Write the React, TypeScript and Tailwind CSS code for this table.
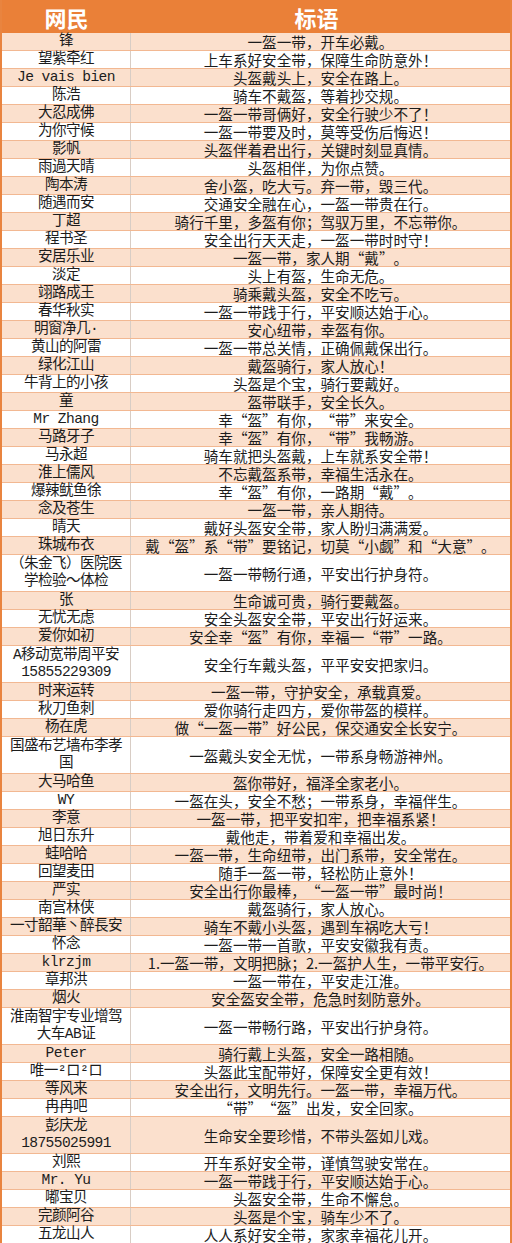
import React from "react";

type Row = {
  name: React.ReactNode;
  slogan: string;
  tall?: boolean;
};

const ROWS: Row[] = [
  { name: "锋", slogan: "一盔一带，开车必戴。" },
  { name: "望紫牵红", slogan: "上车系好安全带，保障生命防意外！" },
  { name: "Je vais bien", slogan: "头盔戴头上，安全在路上。" },
  { name: "陈浩", slogan: "骑车不戴盔，等着抄交规。" },
  { name: "大忍成佛", slogan: "一盔一带哥俩好，安全行驶少不了！" },
  { name: "为你守候", slogan: "一盔一带要及时，莫等受伤后悔迟！" },
  { name: "影帆", slogan: "头盔伴着君出行，关键时刻显真情。" },
  { name: "雨過天晴", slogan: "头盔相伴，为你点赞。" },
  { name: "陶本涛", slogan: "舍小盔，吃大亏。弃一带，毁三代。" },
  { name: "随遇而安", slogan: "交通安全融在心，一盔一带贵在行。" },
  { name: "丁超", slogan: "骑行千里，多盔有你；驾驭万里，不忘带你。" },
  { name: "程书圣", slogan: "安全出行天天走，一盔一带时时守！" },
  { name: "安居乐业", slogan: "一盔一带，家人期“戴”。" },
  { name: "淡定", slogan: "头上有盔，生命无危。" },
  { name: "翊路成王", slogan: "骑乘戴头盔，安全不吃亏。" },
  { name: "春华秋实", slogan: "一盔一带践于行，平安顺达始于心。" },
  { name: "明窗净几·", slogan: "安心纽带，幸盔有你。" },
  { name: "黄山的阿雷", slogan: "一盔一带总关情，正确佩戴保出行。" },
  { name: "绿化江山", slogan: "戴盔骑行，家人放心！" },
  { name: "牛背上的小孩", slogan: "头盔是个宝，骑行要戴好。" },
  { name: "童", slogan: "盔带联手，安全长久。" },
  { name: "Mr Zhang", slogan: "幸“盔”有你，“带”来安全。" },
  { name: "马路牙子", slogan: "幸“盔”有你，“带”我畅游。" },
  { name: "马永超", slogan: "骑车就把头盔戴，上车就系安全带！" },
  { name: "淮上儒风", slogan: "不忘戴盔系带，幸福生活永在。" },
  { name: "爆辣鱿鱼徐", slogan: "幸“盔”有你，一路期“戴”。" },
  { name: "念及苍生", slogan: "一盔一带，亲人期待。" },
  { name: "晴天", slogan: "戴好头盔安全带，家人盼归满满爱。" },
  { name: "珠城布衣", slogan: "戴“盔”系“带”要铭记，切莫“小觑”和“大意”。" },
  {
    name: (
      <>
        （朱金飞）医院医
        <br />
        学检验～体检
      </>
    ),
    slogan: "一盔一带畅行通，平安出行护身符。",
    tall: true,
  },
  { name: "张", slogan: "生命诚可贵，骑行要戴盔。" },
  { name: "无忧无虑", slogan: "安全头盔安全带，平安出行好运来。" },
  { name: "爱你如初", slogan: "安全幸“盔”有你，幸福一“带”一路。" },
  {
    name: (
      <>
        A移动宽带周平安
        <br />
        15855229309
      </>
    ),
    slogan: "安全行车戴头盔，平平安安把家归。",
    tall: true,
  },
  { name: "时来运转", slogan: "一盔一带，守护安全，承载真爱。" },
  { name: "秋刀鱼刺", slogan: "爱你骑行走四方，爱你带盔的模样。" },
  { name: "杨在虎", slogan: "做“一盔一带”好公民，保交通安全长安宁。" },
  {
    name: (
      <>
        国盛布艺墙布李孝
        <br />
        国
      </>
    ),
    slogan: "一盔戴头安全无忧，一带系身畅游神州。",
    tall: true,
  },
  { name: "大马哈鱼", slogan: "盔你带好，福泽全家老小。" },
  { name: "WY", slogan: "一盔在头，安全不愁；一带系身，幸福伴生。" },
  { name: "李意", slogan: "一盔一带，把平安扣牢，把幸福系紧！" },
  { name: "旭日东升", slogan: "戴他走，带着爱和幸福出发。" },
  { name: "蛙哈哈", slogan: "一盔一带，生命纽带，出门系带，安全常在。" },
  { name: "回望麦田", slogan: "随手一盔一带，轻松防止意外！" },
  { name: "严实", slogan: "安全出行你最棒，“一盔一带”最时尚！" },
  { name: "南宫林侠", slogan: "戴盔骑行，家人放心。" },
  { name: "一寸韶華丶醉長安", slogan: "骑车不戴小头盔，遇到车祸吃大亏！" },
  { name: "怀念", slogan: "一盔一带一首歌，平安安徽我有责。" },
  { name: "klrzjm", slogan: "1.一盔一带，文明把脉；2.一盔护人生，一带平安行。" },
  { name: "章邦洪", slogan: "一盔一带在，平安走江淮。" },
  { name: "烟火", slogan: "安全盔安全带，危急时刻防意外。" },
  {
    name: (
      <>
        淮南智宇专业增驾
        <br />
        大车AB证
      </>
    ),
    slogan: "一盔一带畅行路，平安出行护身符。",
    tall: true,
  },
  { name: "Peter", slogan: "骑行戴上头盔，安全一路相随。" },
  { name: "唯一²ロ²ロ", slogan: "头盔此宝配带好，保障安全更有效！" },
  { name: "等风来", slogan: "安全出行，文明先行。一盔一带，幸福万代。" },
  { name: "冉冉吧", slogan: "“带”“盔”出发，安全回家。" },
  {
    name: (
      <>
        彭庆龙
        <br />
        18755025991
      </>
    ),
    slogan: "生命安全要珍惜，不带头盔如儿戏。",
    tall: true,
  },
  { name: "刘熙", slogan: "开车系好安全带，谨慎驾驶安常在。" },
  { name: "Mr. Yu", slogan: "一盔一带践于行，平安顺达始于心。" },
  { name: "嘟宝贝", slogan: "头盔安全带，生命不懈怠。" },
  { name: "完颜阿谷", slogan: "头盔是个宝，骑车少不了。" },
  { name: "五龙山人", slogan: "人人系好安全带，家家幸福花儿开。" },
];

// quotes sit in a full-width cell, like the sheet's 宋体 rendering
const Slogan = ({ text }: { text: string }) => (
  <>
    {text.split(/([“”])/).map((part, i) =>
      part === "“" ? (
        <span key={i} className="inline-block w-[1em] text-right">
          “
        </span>
      ) : part === "”" ? (
        <span key={i} className="inline-block w-[1em] text-left">
          ”
        </span>
      ) : (
        <span key={i}>{part}</span>
      ),
    )}
  </>
);

const App = () => {
  return (
    <main className="w-[512px] bg-white border-x-2 border-[#e9843f] text-[#1c1c1c]">
      <div className="grid h-[33px] grid-cols-[129px_1fr] bg-[#ea8038] font-['Noto_Sans_CJK_SC',sans-serif] text-[22px] font-bold leading-none text-white">
        <div className="flex items-center justify-center">网民</div>
        <div className="flex items-center justify-center pr-2">标语</div>
      </div>
      {ROWS.map((row, i) => (
        <div
          key={i}
          className={`grid grid-cols-[129px_1fr] border-b border-[#f2b892] ${
            row.tall ? "h-[37px]" : "h-[18px]"
          } ${i % 2 === 0 ? "bg-[#fbe0cd]" : "bg-white"}`}
        >
          <div className="flex items-center justify-center border-r border-[#d8cdc5] text-center font-['Liberation_Mono','Noto_Sans_CJK_SC',monospace] text-[14.6px] leading-[17px] tracking-[-0.6px]">
            <span>{row.name}</span>
          </div>
          <div className="flex items-center justify-center whitespace-nowrap font-['Noto_Sans_CJK_SC',sans-serif] text-[14.6px] leading-[17px]">
            <span>
              <Slogan text={row.slogan} />
            </span>
          </div>
        </div>
      ))}
    </main>
  );
};

export default App;
